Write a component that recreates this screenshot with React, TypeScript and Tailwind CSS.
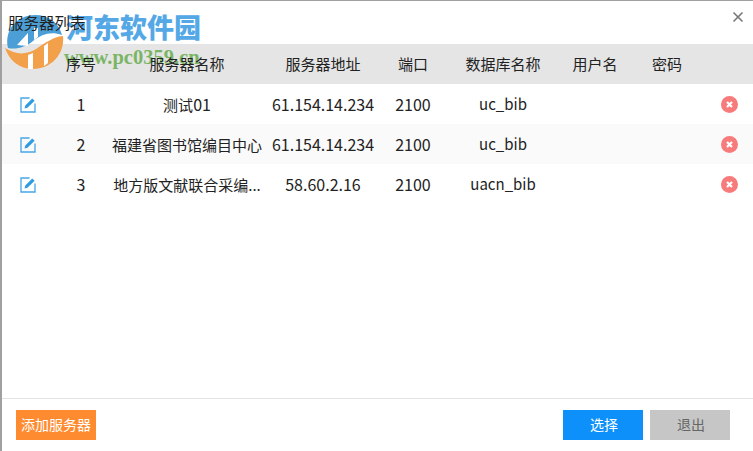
import React from 'react';
import { X } from 'lucide-react';

const font = { fontFamily: '"Noto Sans CJK SC", sans-serif' };
const rowGrid = 'grid grid-cols-[53px_52px_160px_112px_68px_112px_72px_72px_52px] items-center h-10';

const servers = [
  { id: 1, name: '测试', suffix: '01', addr: '61.154.14.234', port: '2100', db: 'uc_bib' },
  { id: 2, name: '福建省图书馆编目中心', suffix: '', addr: '61.154.14.234', port: '2100', db: 'uc_bib' },
  { id: 3, name: '地方版文献联合采编...', suffix: '', addr: '58.60.2.16', port: '2100', db: 'uacn_bib' },
];

function EditIcon() {
  return (
    <svg width="17" height="17" viewBox="0 0 17 17" fill="none">
      <path d="M9.5 2H1v14h14V7.5" stroke="#45a6e6" strokeWidth="1.3" />
      <path d="M4.5 12.5l.8-3L12.2 2.400l2.400 2.400L7.500 11.700z" fill="#2f9be3" />
    </svg>
  );
}

function DeleteIcon() {
  return (
    <svg width="17" height="17" viewBox="0 0 17 17">
      <circle cx="8.500" cy="8.500" r="8.500" fill="#f77b7b" />
      <path d="M6 6l5 5M11 6l-5 5" stroke="#fff" strokeWidth="2.200" />
    </svg>
  );
}

function Watermark() {
  return (
    <div className="absolute left-0 top-0 w-[210px] h-[72px] pointer-events-none">
      <svg className="absolute left-[2px] top-[13px]" width="62" height="58" viewBox="4 14 62 58">
        <path d="M8 48C4 30 17 15 35 15c14 0 24 8 27 20-11-4-20-1-29 6-7 6-17 9-25 7z" fill="#4b9fd6" />
        <path d="M17 45l11-12v13z" fill="#fff" />
        <path d="M34 28h4v9l-4 3z" fill="#fff" />
        <path d="M5 48c11 7 21 7 31 1 9-6 17-12 27-13 2 18-12 33-30 33C19 69 9 60 5 48z" fill="#f2a04a" />
        <path d="M28 55l5-2v16h-5zM44 46l4-3v20l-4 3z" fill="#fff" />
      </svg>
      <span className="absolute left-[64px] top-[8px] text-[27px] leading-[36px] font-black text-[#55a8e6] whitespace-nowrap">河东软件园</span>
      <span className="absolute left-[62px] top-[46px] text-[20.500px] leading-5 font-bold text-[#7ab566] whitespace-nowrap" style={{ fontFamily: '"Liberation Serif", serif' }}>www.pc0359.cn</span>
    </div>
  );
}

export default function App() {
  return (
    <div className="relative w-[753px] h-[451px] bg-white text-[15px] text-[#222] border-t border-t-[#a0a0a0] border-l-2 border-l-[#a0a0a0] flex flex-col overflow-hidden" style={font}>
      <div className="flex items-center justify-between h-[43px] pl-[6px] pr-[7px]">
        <span className="relative z-10 text-[15.500px] mt-[1px]">服务器列表</span>
        <X className="w-4 h-4 text-[#777] mb-[12px]" strokeWidth={2.5} />
      </div>

      <div className={`${rowGrid} bg-[#e5e5e5] text-center`}>
        <span />
        <span className="relative z-10">序号</span>
        <span className="relative z-10">服务器名称</span>
        <span>服务器地址</span>
        <span>端口</span>
        <span>数据库名称</span>
        <span>用户名</span>
        <span>密码</span>
        <span />
      </div>

      {servers.map((s, i) => (
        <div key={s.id} className={`${rowGrid} text-center ${i === 1 ? 'bg-[#fafafa]' : 'bg-white'}`}>
          <span className="flex justify-center"><EditIcon /></span>
          <span className="text-base">{s.id}</span>
          <span className="whitespace-nowrap">{s.name}<span className="text-base">{s.suffix}</span></span>
          <span className="text-base">{s.addr}</span>
          <span className="text-base">{s.port}</span>
          <span>{s.db}</span>
          <span />
          <span />
          <span className="flex justify-center"><DeleteIcon /></span>
        </div>
      ))}

      <div className="mt-auto h-[53px] border-t border-t-[#e3e3e3] flex items-center pl-[14px] pr-[23px] pb-[1px]">
        <button className="w-20 h-[30px] bg-[#ff8b30] text-white text-[14px]">添加服务器</button>
        <button className="ml-auto w-20 h-[30px] bg-[#0e90fb] text-white text-[14px] pl-[2px]">选择</button>
        <button className="ml-[7px] w-20 h-[30px] bg-[#c6c6c6] text-[#666] text-[14px] pl-[2px]">退出</button>
      </div>

      <Watermark />
    </div>
  );
}
